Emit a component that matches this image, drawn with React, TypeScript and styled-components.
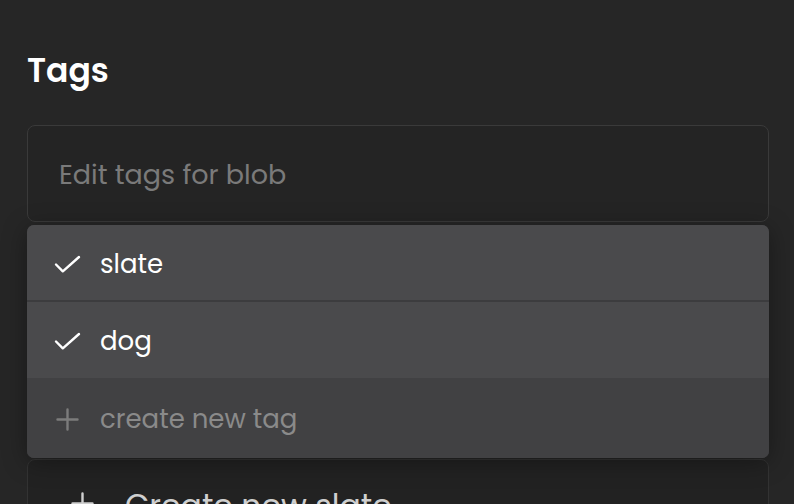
import React from "react";
import styled, { createGlobalStyle } from "styled-components";

const Global = createGlobalStyle`
  html, body { margin: 0; padding: 0; background: #262626; }
  body { font-family: "Poppins", Inter, "Noto Sans", sans-serif; -webkit-font-smoothing: antialiased; }
  * { box-sizing: border-box; }
`;

const Page = styled.div`
  width: 794px;
  height: 504px;
  overflow: hidden;
  background: #262626;
  padding: 49px 25px 0 27px;
`;

const Title = styled.h1`
  margin: 0 0 32px 0;
  font-size: 33px;
  line-height: 44px;
  font-weight: 600;
  color: #ffffff;
`;

const InputBox = styled.div`
  height: 97px;
  border: 1.5px solid #3a3a3a;
  border-radius: 8px;
  background: #242424;
  display: flex;
  align-items: center;
  padding: 2px 0 0 31px;
`;

const Placeholder = styled.span`
  font-size: 27px;
  color: #7a7a7a;
`;

const Dropdown = styled.div`
  margin-top: 3px;
  border-radius: 7px;
  overflow: hidden;
  background: #414143;
  box-shadow: 0 4px 24px rgba(0, 0, 0, 0.35);
  display: flex;
  flex-direction: column;
  position: relative;
  z-index: 2;
`;

const Row = styled.div<{ $h: number; $bg: string; $divider?: boolean }>`
  height: ${(p) => p.$h}px;
  background: ${(p) => p.$bg};
  border-bottom: ${(p) => (p.$divider ? "2px solid #3c3c3e" : "none")};
  display: flex;
  align-items: center;
  padding: 3px 0 0 26px;
  gap: 18px;
`;

const RowText = styled.span<{ $muted?: boolean }>`
  font-size: 26px;
  font-weight: 400;
  color: ${(p) => (p.$muted ? "#8a8a8a" : "#ffffff")};
`;

const IconBox = styled.span`
  width: 29px;
  display: flex;
  align-items: center;
  justify-content: center;
`;

const NewSlate = styled.div`
  margin-top: 1px;
  height: 120px;
  border: 1.5px solid #333;
  border-radius: 8px;
  background: #222222;
  display: flex;
  align-items: flex-start;
  padding: 32px 0 0 43px;
  gap: 31px;
`;

const NewSlateText = styled.span`
  font-size: 31.5px;
  line-height: 1;
  margin-top: -1px;
  color: #cfcfcf;
`;

const Check = () => (
  <svg width="27" height="19" viewBox="0 0 27 19" fill="none">
    <polyline points="2,9.5 8.8,16.3 25,2" stroke="#fff" strokeWidth="2.4" strokeLinecap="round" strokeLinejoin="round" />
  </svg>
);

const Plus = ({ color }: { color: string }) => (
  <svg width="23" height="23" viewBox="0 0 23 23" fill="none">
    <path d="M11.5 1.5v20M1.5 11.5h20" stroke={color} strokeWidth="2.4" strokeLinecap="round" />
  </svg>
);

export default function App() {
  return (
    <>
      <Global />
      <Page>
        <Title>Tags</Title>
        <InputBox>
          <Placeholder>Edit tags for blob</Placeholder>
        </InputBox>
        <Dropdown>
          <Row $h={77} $bg="#4a4a4c" $divider>
            <IconBox><Check /></IconBox>
            <RowText>slate</RowText>
          </Row>
          <Row $h={76} $bg="#4a4a4c">
            <IconBox><Check /></IconBox>
            <RowText>dog</RowText>
          </Row>
          <Row $h={80} $bg="#414143">
            <IconBox><Plus color="#7c7c7c" /></IconBox>
            <RowText $muted>create new tag</RowText>
          </Row>
        </Dropdown>
        <NewSlate>
          <Plus color="#cfcfcf" />
          <NewSlateText>Create new slate</NewSlateText>
        </NewSlate>
      </Page>
    </>
  );
}
